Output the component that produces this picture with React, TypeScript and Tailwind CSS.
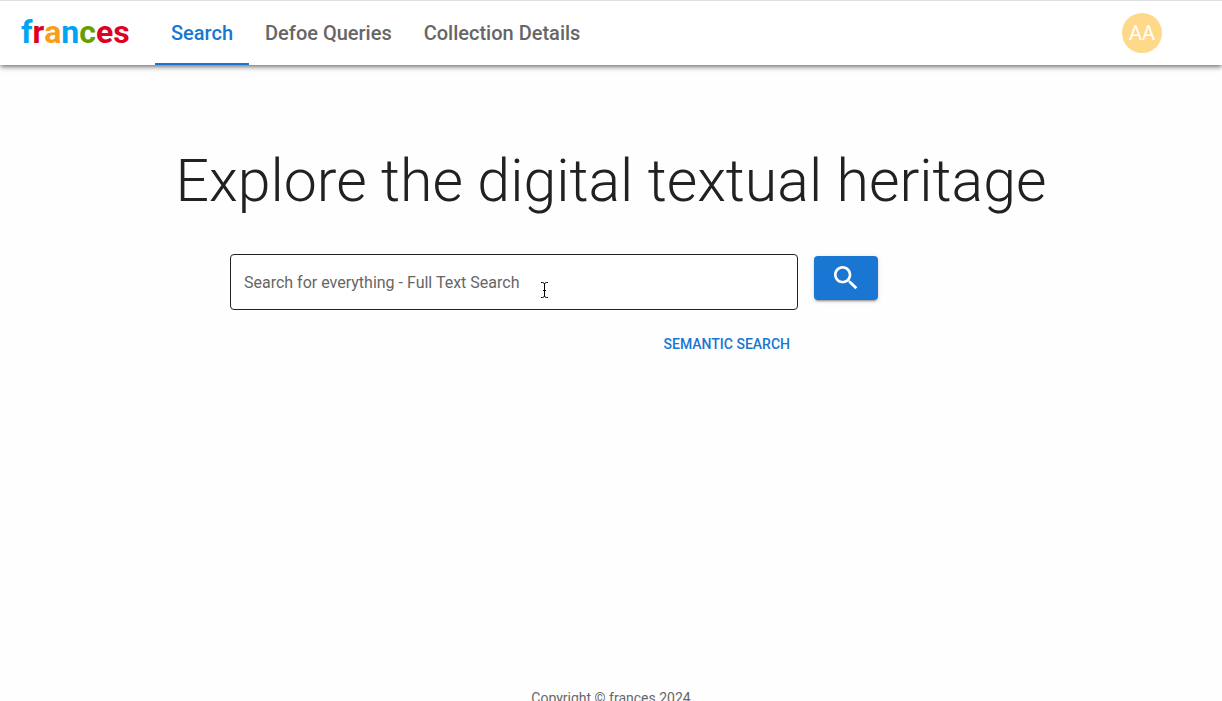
import React from "react";

const brand = [
  { letter: "f", tone: "text-[#00a4f4]" },
  { letter: "r", tone: "text-[#dd0020]" },
  { letter: "a", tone: "text-[#f99d1c]" },
  { letter: "n", tone: "text-[#00a4f4]" },
  { letter: "c", tone: "text-[#62a000]" },
  { letter: "e", tone: "text-[#dd0020]" },
  { letter: "s", tone: "text-[#dd0020]" },
];

const tabs = [
  { label: "Search", href: "#search", active: true },
  { label: "Defoe Queries", href: "#defoe", active: false },
  { label: "Collection Details", href: "#collections", active: false },
];

function Header() {
  return (
    <header className="flex h-[65px] items-stretch border-t border-[#dfdfdf] bg-white pr-15 pl-[21px] shadow-[0_2px_4px_-1px_rgba(0,0,0,0.4),0_3px_5px_0_rgba(0,0,0,0.25)]">
      <a href="#home" className="flex w-[134px] items-center pb-0.5 text-[32px] leading-none font-bold">
        {brand.map((b, i) => (
          <span key={i} className={b.tone}>
            {b.letter}
          </span>
        ))}
      </a>
      <nav className="flex items-stretch">
        {tabs.map((tab) => (
          <a
            key={tab.label}
            href={tab.href}
            aria-current={tab.active ? "page" : undefined}
            className={
              tab.active
                ? "flex items-center border-y-2 border-t-transparent border-b-[#1976d2] px-4 text-xl font-medium text-[#1976d2]"
                : "flex items-center border-y-2 border-transparent px-4 text-xl font-medium text-[#666666]"
            }
          >
            {tab.label}
          </a>
        ))}
      </nav>
      <button
        type="button"
        aria-label="Account"
        className="ml-auto flex size-10 items-center justify-center self-center rounded-full bg-[#ffd98a] text-xl text-white"
      >
        AA
      </button>
    </header>
  );
}

function SearchForm() {
  return (
    <form
      className="mx-auto mt-[37px] w-full max-w-[762px]"
      onSubmit={(e) => e.preventDefault()}
    >
      <div className="flex gap-4">
        <div className="relative max-w-[568px] grow">
          <input
            type="text"
            aria-label="Search for everything"
            placeholder="Search for everything - Full Text Search"
            className="h-14 w-full rounded border border-[#212121] bg-white px-[13px] text-base text-[#212121] outline-none placeholder:text-[#666666]"
          />
          <svg
            aria-hidden="true"
            viewBox="0 0 9 18"
            className="pointer-events-none absolute top-[27px] left-[310px] h-[18px] w-[9px] fill-none stroke-black"
          >
            <path d="M1 1.5h1.5q1.5 0 2 1.5q.5-1.5 2-1.5H8M4.500 3v12M1 16.500h1.500q1.500 0 2-1.500q.5 1.500 2 1.500H8M3 9.500h3" />
          </svg>
        </div>
        <button
          type="submit"
          aria-label="Search"
          className="mt-0.5 flex h-11 w-16 items-center justify-center rounded bg-[#1976d2] text-white shadow-[0_3px_1px_-2px_rgba(0,0,0,0.2),0_2px_2px_0_rgba(0,0,0,0.14),0_1px_5px_0_rgba(0,0,0,0.12)]"
        >
          <svg aria-hidden="true" viewBox="0 0 24 24" className="size-8 fill-current">
            <path d="M15.5 14h-.79l-.28-.27C15.41 12.59 16 11.11 16 9.500 16 5.910 13.090 3 9.500 3S3 5.910 3 9.500 5.910 16 9.500 16c1.610 0 3.090-.59 4.230-1.570l.27.28v.79l5 4.990L20.490 19l-4.990-5zm-6 0C7.010 14 5 11.990 5 9.500S7.010 5 9.500 5 14 7.010 14 9.500 11.990 14 9.500 14z" />
          </svg>
        </button>
      </div>
      <div className="mt-4 flex max-w-[568px] justify-end">
        <button type="button" className="px-2 py-1.5 text-sm leading-6 font-medium text-[#1976d2]">
          SEMANTIC SEARCH
        </button>
      </div>
    </form>
  );
}

export default function App() {
  return (
    <div className="flex min-h-screen flex-col bg-[#fefefe] font-['Roboto','Liberation_Sans',sans-serif] text-[#212121]">
      <Header />
      <main className="px-6 pt-20">
        <h1 className="text-center text-[59px] leading-[72px] font-light">
          Explore the digital textual heritage
        </h1>
        <SearchForm />
      </main>
      <footer className="mt-[326px] text-center text-sm leading-5 text-[#666666]">
        Copyright © frances 2024
      </footer>
    </div>
  );
}
